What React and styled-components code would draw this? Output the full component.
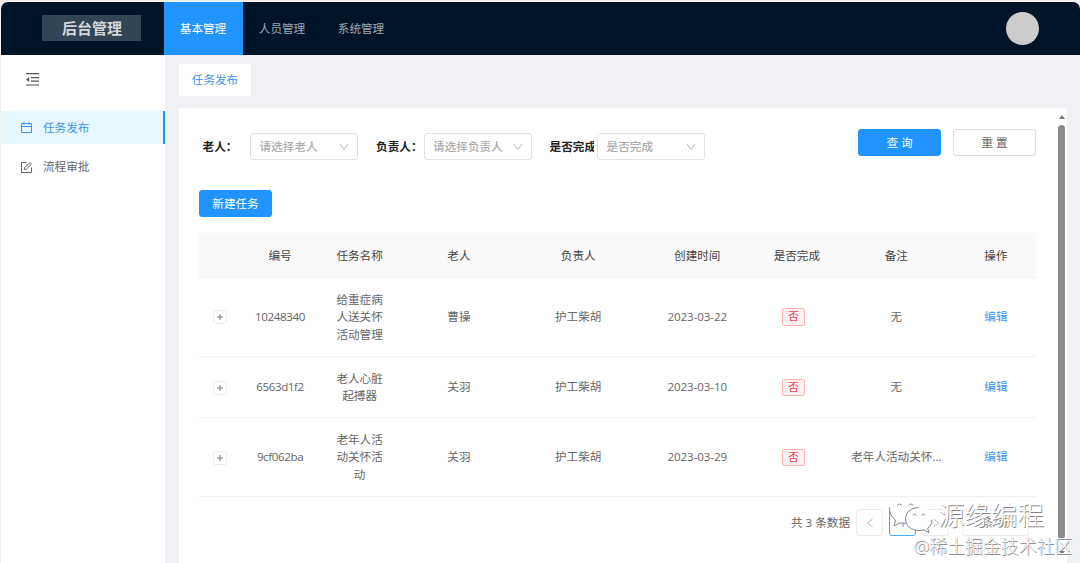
import styled, { createGlobalStyle, css } from 'styled-components'

const GlobalStyle = createGlobalStyle`
* {
  box-sizing: border-box;
}

body {
  margin: 0;
  background: #f1f2ee;
  font-family: "Open Sans", "Noto Sans CJK SC", sans-serif;
  font-size: 11.6px;
  line-height: 17.5px;
  color: #666;
  overflow: hidden;
}
`

const Page = styled.div`
  display: flex;
  flex-direction: column;
  height: 563px;
  padding: 2px 0 0 1px;
  position: relative;
`

const Header = styled.header`
  display: flex;
  align-items: center;
  flex: 0 0 52.5px;
  padding: 0 41px 0 41px;
  background: #001428;
  border-radius: 7px 7px 0 0;
`

const Logo = styled.div`
  width: 99px;
  height: 26px;
  margin-right: 22.5px;
  padding-left: 1px;
  background: #334454;
  color: #d2d5d8;
  font-size: 15px;
  font-weight: 700;
  line-height: 26px;
  text-align: center;
`

const NavItem = styled.a`
  width: 79px;
  height: 52.5px;
  line-height: 54px;
  text-align: center;
  color: ${props => (props.$active ? '#fff' : '#a0a8b0')};
  background: ${props => (props.$active ? '#2194ff' : 'transparent')};
`

const Avatar = styled.div`
  width: 33px;
  height: 33px;
  margin-left: auto;
  border-radius: 50%;
  background: #ccc;
`

const Body = styled.div`
  display: flex;
  flex: 1;
  min-height: 0;
  background: #eff1f5;
`

const Sidebar = styled.aside`
  flex: 0 0 164px;
  padding-top: 17px;
  background: #fff;
`

const Fold = styled.div`
  height: 39.5px;
  padding-left: 24px;
`

const MenuItem = styled.a`
  display: flex;
  align-items: center;
  gap: 10px;
  height: 33px;
  margin-bottom: 6.5px;
  padding-left: 19px;
  color: ${props => (props.$active ? '#3f94f0' : '#666')};
  ${props => props.$active && css`
    background: #e6f7ff;
    border-right: 2.5px solid #2f90ee;
  `}
`

const Main = styled.main`
  display: flex;
  flex-direction: column;
  align-items: flex-start;
  flex: 1;
  min-width: 0;
  padding: 9.5px 13px 0 14px;
`

const PageTab = styled.div`
  width: 72px;
  height: 32px;
  margin-bottom: 12px;
  background: #fff;
  color: #3f94f0;
  line-height: 31px;
  text-align: center;
`

const Card = styled.section`
  display: flex;
  align-self: stretch;
  flex: 1;
  background: #fff;
`

const Content = styled.div`
  flex: 0 0 857px;
  padding: 21px 0 0 20px;
`

const Filters = styled.div`
  display: flex;
  align-items: flex-start;
  height: 61px;
  padding-left: 3.6px;
`

const Field = styled.div`
  display: flex;
  align-items: center;
  margin: 4px 18px 0 0;
`

const Label = styled.label`
  width: 44.5px;
  margin-right: 3px;
  overflow: hidden;
  white-space: nowrap;
  color: #222;
  font-weight: 700;
`

const Select = styled.div`
  display: flex;
  align-items: center;
  justify-content: space-between;
  width: 108px;
  height: 27px;
  padding: 0 8px 0 8.5px;
  border: 1px solid #e2e2e2;
  border-radius: 3px;
  color: #adadad;
  font-weight: 500;
`

const Button = styled.button`
  width: ${props => props.$width || 83}px;
  height: 27px;
  padding: 0;
  border: 1px solid ${props => (props.$primary ? '#2194ff' : '#dcdcdc')};
  border-radius: 3px;
  background: ${props => (props.$primary ? '#2194ff' : '#fff')};
  color: ${props => (props.$primary ? '#fff' : '#666')};
  font: inherit;
`

const Actions = styled.div`
  display: flex;
  gap: 12px;
  margin-left: auto;
`

const Table = styled.table`
  width: 837px;
  margin-top: 16px;
  table-layout: fixed;
  border-collapse: separate;
  border-spacing: 0;
  text-align: center;
`

const Th = styled.th`
  width: ${props => props.$width}px;
  height: 44.5px;
  padding: 1px 0 0;
  background: #fafafa;
  border-bottom: 1px solid #f3f3f3;
  color: #444;
  font-weight: 400;
`

const Tr = styled.tr`
  height: ${props => props.$height}px;
`

const Td = styled.td`
  padding: 0 13px;
  border-bottom: 1px solid #f0f0f0;
  letter-spacing: ${props => props.$spacing || 0}px;
  white-space: ${props => (props.$wrap ? 'normal' : 'nowrap')};
`

const Expand = styled.span`
  display: flex;
  align-items: center;
  justify-content: center;
  width: 14px;
  height: 14px;
  margin: 1px 0 0 1px;
  border: 1px solid #ededed;
  border-radius: 2px;
`

const Tag = styled.span`
  display: inline-block;
  width: 23px;
  height: 17.5px;
  margin: -1px 6.6px 0 0;
  border: 1px solid #ffb3b3;
  border-radius: 2px;
  background: #fff1f0;
  color: #e8405a;
  font-size: 10.5px;
  line-height: 15.5px;
  vertical-align: middle;
`

const Link = styled.a`
  color: #3f94f0;
`

const Pagination = styled.div`
  display: flex;
  align-items: center;
  justify-content: flex-end;
  gap: 6px;
  margin-top: 12px;
  padding-right: 7px;
`

const PageBox = styled.div`
  display: flex;
  align-items: center;
  justify-content: center;
  width: ${props => props.$width || 27}px;
  height: 27px;
  margin-left: ${props => (props.$width ? 7 : 0)}px;
  border: 1px solid ${props => (props.$active ? '#4aa8f8' : '#ececec')};
  border-radius: 3px;
  color: ${props => (props.$active ? '#3f94f0' : '#888')};
`

const Scrollbar = styled.div`
  display: flex;
  flex-direction: column;
  align-items: center;
  width: 11px;
  margin-left: 20px;
  padding-top: 7px;
`

const Arrow = styled.i`
  border: 3.5px solid transparent;
  border-top-width: ${props => (props.$down ? 4 : 0)}px;
  border-bottom-width: ${props => (props.$down ? 0 : 4)}px;
  border-top-color: #777;
  border-bottom-color: #777;
`

const Thumb = styled.div`
  width: 7px;
  height: 414px;
  margin: 6px 0 12px;
  border-radius: 4px;
  background: #8b8b8b;
`

const Brand = styled.div`
  position: absolute;
  left: 888px;
  top: 496px;
  display: flex;
  align-items: center;
  gap: 4px;
  color: #fff;
  font-size: 26.5px;
  font-weight: 300;
  line-height: 38px;
  white-space: nowrap;
  text-shadow: 0.8px 0.8px 0.3px #858585;
`

const Community = styled.div`
  position: absolute;
  left: 913.5px;
  top: 534px;
  color: #fff;
  font-size: 17.9px;
  font-weight: 300;
  line-height: 24px;
  white-space: nowrap;
  text-shadow: 0.7px 0.6px 0.3px #7c7c7c, -0.3px 0 0.4px #bbb;
`

const FoldIcon = () => (
  <svg width="15" height="15" viewBox="0 0 15 15" fill="none" stroke="#555" strokeWidth="1.2">
    <path d="M1 1.7h13M6 5.6h8M6 9.2h8M1 13h13" />
    <path d="M1 7.4l3.2-2.5v5z" fill="#555" stroke="none" />
  </svg>
)

const CalendarIcon = () => (
  <svg width="13" height="13" viewBox="0 0 13 13" fill="none" stroke="currentColor">
    <path d="M1.5 2.5h10v9h-10zM1.5 5.5h10M4 .8v3M9 .8v3" />
  </svg>
)

const FormIcon = () => (
  <svg width="13" height="13" viewBox="0 0 13 13" fill="none" stroke="currentColor">
    <path d="M6.5 1.5h-5v10h10v-5" />
    <path d="M4.3 8.7l.3-2 5.3-5.3 1.6 1.6-5.3 5.3z" />
  </svg>
)

const Chevron = () => (
  <svg width="10" height="8" viewBox="0 0 10 8" fill="none" stroke="#bbb">
    <path d="M1 1l4 5.5L9 1" />
  </svg>
)

const PageArrow = ({ next }) => (
  <svg width="8" height="10" viewBox="0 0 8 10" fill="none" stroke="#bbb">
    <path d={next ? 'M1.5 1l5 4-5 4' : 'M6.5 1l-5 4 5 4'} />
  </svg>
)

const PlusIcon = () => (
  <svg width="6" height="6" viewBox="0 0 6 6" stroke="#777">
    <path d="M3 0v6M0 3h6" />
  </svg>
)

const ChatIcon = () => (
  <svg width="46" height="38" viewBox="0 0 46 38" fill="none" stroke="#858585" strokeLinecap="round">
    <path d="M16 1C7 1 1.5 6 1.5 13c0 5 2 9 5.500 11.500L6 30l6-3c2 .5 4 .6 6 .4L31 10C29 4 23 1 16 1z" fill="#fff" stroke="none" />
    <path d="M1.500 12c0 5 2 9.500 6 12L6 30l5.500-3 6 .4" />
    <path d="M9.500 9q1.700-2.600 4 0M21 9q1.700-2.600 4 0" />
    <path d="M31 11.500c-8 0-13.500 5-13.500 11.500S23 34.500 31 34.500c2 0 3.500-.2 5-.7l5 3-1.300-4.600c2.800-2 4.800-5 4.800-9 0-6.500-6-11.700-13.500-11.700z" fill="#fff" stroke="none" />
    <path d="M30 11.500c-7.500.4-12.500 5.300-12.500 11.500S23 34.500 31 34.500c2 0 3.500-.2 5-.7l5 3-1.300-4.600c2.800-2 4.300-5 4.300-8" />
    <path d="M25 19q1.500-2.400 3 0M34 19q1.500-2.400 3 0" />
  </svg>
)

const columns = [
  ['', 41],
  ['编号', 80],
  ['任务名称', 79],
  ['老人', 119.5],
  ['负责人', 119],
  ['创建时间', 119],
  ['是否完成', 80],
  ['备注', 119],
  ['操作', 80],
]

const tasks = [
  { id: '10248340', name: '给重症病人送关怀活动管理', elder: '曹操', date: '2023-03-22', remark: '无', height: 79.5 },
  { id: '6563d1f2', name: '老人心脏起搏器', elder: '关羽', date: '2023-03-10', remark: '无', height: 61 },
  { id: '9cf062ba', name: '老年人活动关怀活动', elder: '关羽', date: '2023-03-29', remark: '老年人活动关怀...', height: 79 },
]

const filters = [
  ['老人：', '请选择老人'],
  ['负责人：', '请选择负责人'],
  ['是否完成：', '是否完成'],
]

function App() {
  return (
    <Page>
      <GlobalStyle />
      <Header>
        <Logo>后台管理</Logo>
        <NavItem $active>基本管理</NavItem>
        <NavItem>人员管理</NavItem>
        <NavItem>系统管理</NavItem>
        <Avatar />
      </Header>
      <Body>
        <Sidebar>
          <Fold><FoldIcon /></Fold>
          <MenuItem $active><CalendarIcon />任务发布</MenuItem>
          <MenuItem><FormIcon />流程审批</MenuItem>
        </Sidebar>
        <Main>
          <PageTab>任务发布</PageTab>
          <Card>
            <Content>
              <Filters>
                {filters.map(([label, placeholder]) => (
                  <Field key={label}>
                    <Label>{label}</Label>
                    <Select>{placeholder}<Chevron /></Select>
                  </Field>
                ))}
                <Actions>
                  <Button $primary>查 询</Button>
                  <Button>重 置</Button>
                </Actions>
              </Filters>
              <Button $primary $width={73}>新建任务</Button>
              <Table>
                <thead>
                  <tr>
                    {columns.map(([title, width], i) => (
                      <Th key={i} $width={width}>{title}</Th>
                    ))}
                  </tr>
                </thead>
                <tbody>
                  {tasks.map(task => (
                    <Tr key={task.id} $height={task.height}>
                      <Td><Expand><PlusIcon /></Expand></Td>
                      <Td $spacing={-0.4}>{task.id}</Td>
                      <Td $wrap>{task.name}</Td>
                      <Td>{task.elder}</Td>
                      <Td>护工柴胡</Td>
                      <Td $spacing={-0.1}>{task.date}</Td>
                      <Td><Tag>否</Tag></Td>
                      <Td>{task.remark}</Td>
                      <Td><Link>编辑</Link></Td>
                    </Tr>
                  ))}
                </tbody>
              </Table>
              <Pagination>
                <span>共 3 条数据</span>
                <PageBox><PageArrow /></PageBox>
                <PageBox $active>1</PageBox>
                <PageBox><PageArrow next /></PageBox>
                <PageBox $width={67}>条/页</PageBox>
              </Pagination>
            </Content>
            <Scrollbar>
              <Arrow />
              <Thumb />
              <Arrow $down />
            </Scrollbar>
          </Card>
        </Main>
      </Body>
      <Brand><ChatIcon />源缘编程</Brand>
      <Community>@稀土掘金技术社区</Community>
    </Page>
  )
}

export default App
